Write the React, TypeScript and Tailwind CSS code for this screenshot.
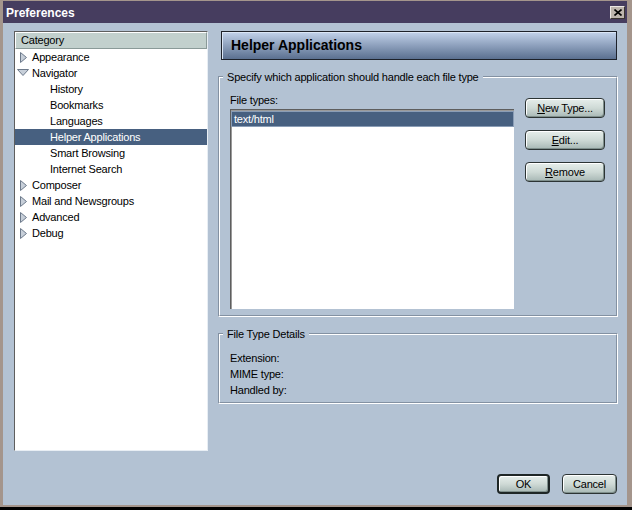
const font = "font-['Liberation_Sans',Arial,sans-serif]";

function Twisty({ open }: { open?: boolean }) {
  if (open) {
    return (
      <svg width="12" height="8" viewBox="0 0 12 8" className="ml-0">
        <polygon points="0.5,0.5 11.5,0.5 6,6.5" fill="#c7cfd9" stroke="#6d7a8b" />
      </svg>
    );
  }
  return (
    <svg width="8" height="11" viewBox="0 0 8 11" className="ml-[3px]">
      <polygon points="0.5,0.5 6.5,5.5 0.5,10.5" fill="#c7cfd9" stroke="#6d7a8b" />
    </svg>
  );
}

type Node = { label: string; level: 0 | 1; open?: boolean; selected?: boolean };

const tree: Node[] = [
  { label: "Appearance", level: 0 },
  { label: "Navigator", level: 0, open: true },
  { label: "History", level: 1 },
  { label: "Bookmarks", level: 1 },
  { label: "Languages", level: 1 },
  { label: "Helper Applications", level: 1, selected: true },
  { label: "Smart Browsing", level: 1 },
  { label: "Internet Search", level: 1 },
  { label: "Composer", level: 0 },
  { label: "Mail and Newsgroups", level: 0 },
  { label: "Advanced", level: 0 },
  { label: "Debug", level: 0 },
];

function Btn({ children, def, w }: { children: React.ReactNode; def?: boolean; w: string }) {
  return (
    <button
      className={`${w} h-[20px] flex items-center justify-center rounded-[4px] bg-gradient-to-b from-[#e6eeeb] via-[#cfdad6] to-[#a8b8b5] shadow-[inset_1px_1px_0_#ffffff,inset_-1px_-1px_0_#7f8f8c] text-black ${
        def ? "border-2 border-[#1e2626]" : "border border-[#2c3434]"
      }`}
    >
      {children}
    </button>
  );
}

function Group({ legend, children, className }: { legend: string; children: React.ReactNode; className?: string }) {
  return (
    <div className={`relative border border-t-[#8391a2] border-l-[#8391a2] border-b-white border-r-white ${className ?? ""}`}>
      <span className="absolute left-[4px] top-[-6px] px-[4px] leading-[13px] bg-[#b3c2d3]">{legend}</span>
      <div className="border border-t-white border-l-white border-b-[#8391a2] border-r-[#8391a2]">{children}</div>
    </div>
  );
}

export default function App() {
  return (
    <div
      className={`${font} w-[632px] h-[510px] flex flex-col bg-[#a4958c] pl-[3px] pr-[5px] pt-[1px] pb-[2px] border-b-[3px] border-black text-[11px] tracking-[-0.2px] text-black`}
    >
      {/* title bar */}
      <div className="h-[22px] bg-[#463d5f] flex items-center justify-between pl-[3px] pr-[2px]">
        <span className="text-white font-bold text-[12px] tracking-normal mt-[1px]">Preferences</span>
        <div className="w-[15px] h-[13px] bg-[#bdb5ad] border border-t-[#ece8e4] border-l-[#ece8e4] border-b-[#3a3430] border-r-[#3a3430] flex items-center justify-center">
          <svg width="8" height="7" viewBox="0 0 8 7">
            <path d="M0.5 0.5 L7.5 6.5 M7.5 0.5 L0.5 6.5" stroke="#000" strokeWidth="1.6" />
          </svg>
        </div>
      </div>

      {/* body */}
      <div className="flex-1 bg-[#b3c2d3] flex flex-col pl-[11px] pr-[9px] pt-[8px]">
        <div className="flex gap-[10px] h-[420px]">
          {/* category tree */}
          <div className="w-[194px] h-full bg-white border border-t-[#5e5e5e] border-l-[#5e5e5e] border-b-[#e8eef4] border-r-[#e8eef4]">
            <div className="h-[17px] bg-[#c2d0cd] border border-t-white border-l-white border-b-[#8a9a98] border-r-[#8a9a98] flex items-center pl-[5px]">
              Category
            </div>
            {tree.map((n) => (
              <div
                key={n.label}
                className={`h-[16px] flex items-center ${n.selected ? "bg-[#476080] text-white" : ""} ${
                  n.level === 1 ? "pl-[35px]" : "pl-[2px]"
                }`}
              >
                {n.level === 0 && (
                  <span className="w-[15px] flex items-center">
                    <Twisty open={n.open} />
                  </span>
                )}
                {n.label}
              </div>
            ))}
          </div>

          {/* right side */}
          <div className="w-[400px] flex flex-col">
            <div className="h-[29px] ml-[3px] mr-[1px] border border-[#1d212a] bg-gradient-to-b from-[#c3d3eb] to-[#5b7090] shadow-[inset_1px_1px_0_#dbe6f6] flex items-center pl-[9px]">
              <span className="font-bold text-[14px] tracking-normal">Helper Applications</span>
            </div>

            <Group legend="Specify which application should handle each file type" className="mt-[16px]">
              <div className="flex pl-[10px] pr-[11px] pt-[16px] pb-[6px] gap-[11px]">
                <div className="flex flex-col">
                  <div className="leading-[13px] h-[15px]">File types:</div>
                  <div className="w-[284px] h-[200px] bg-white border-t border-l border-[#5e5e5e] shadow-[inset_1px_1px_0_#9a9a9a] pt-[1px]">
                    <div className="h-[16px] bg-[#476080] border border-[#8a9db6] text-white flex items-center pl-[2px]">
                      text/html
                    </div>
                  </div>
                </div>
                <div className="flex flex-col gap-[12px] pt-[4px]">
                  <Btn w="w-[80px]">
                    <span className="underline">N</span>ew Type...
                  </Btn>
                  <Btn w="w-[80px]">
                    <span className="underline">E</span>dit...
                  </Btn>
                  <Btn w="w-[80px]">
                    <span className="underline">R</span>emove
                  </Btn>
                </div>
              </div>
            </Group>

            <Group legend="File Type Details" className="mt-[16px]">
              <div className="flex flex-col pl-[10px] pt-[15px] pb-[4px] leading-[16px]">
                <div>Extension:</div>
                <div>MIME type:</div>
                <div>Handled by:</div>
              </div>
            </Group>
          </div>
        </div>

        <div className="flex justify-end gap-[12px] mt-[23px] pr-[1px]">
          <Btn w="w-[53px]" def>
            OK
          </Btn>
          <Btn w="w-[55px]">Cancel</Btn>
        </div>
      </div>
    </div>
  );
}
